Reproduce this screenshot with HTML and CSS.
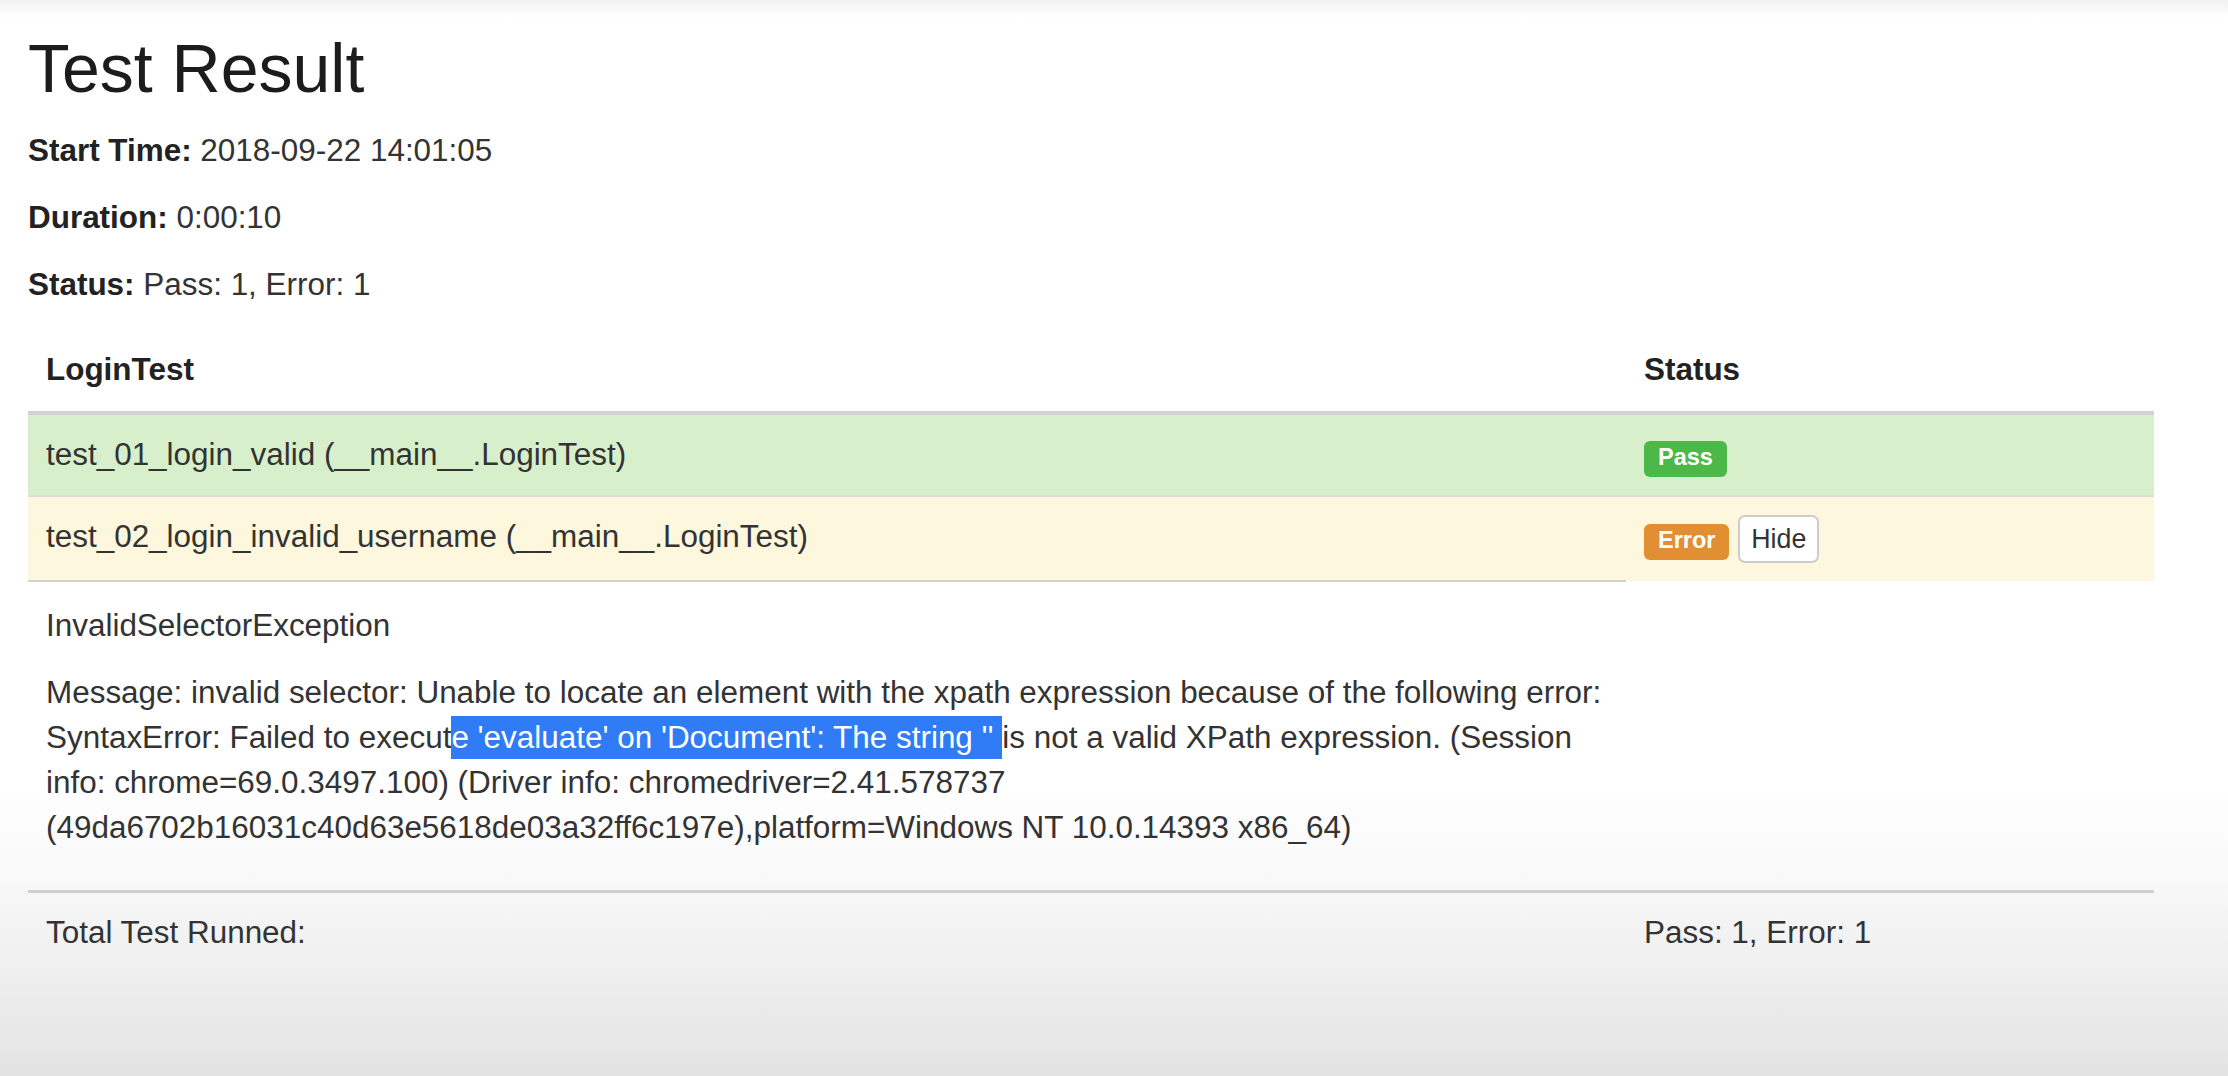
FILE: index.html
```html
<!DOCTYPE html>
<html lang="en">
<head>
<meta charset="utf-8">
<title>Test Result</title>
<link rel="stylesheet" href="styles.css">
</head>
<body>
<div class="page">
  <h1 class="title">Test Result</h1>
  <p class="meta"><strong>Start Time:</strong> 2018-09-22 14:01:05</p>
  <p class="meta"><strong>Duration:</strong> 0:00:10</p>
  <p class="meta"><strong>Status:</strong> Pass: 1, Error: 1</p>
  <table class="results">
    <colgroup><col class="col-name"><col class="col-status"></colgroup>
    <thead>
      <tr><th>LoginTest</th><th>Status</th></tr>
    </thead>
    <tbody>
      <tr class="row-pass">
        <td>test_01_login_valid (__main__.LoginTest)</td>
        <td><span class="badge badge-pass">Pass</span></td>
      </tr>
      <tr class="row-error">
        <td>test_02_login_invalid_username (__main__.LoginTest)</td>
        <td><span class="badge badge-error">Error</span> <button class="btn-hide" type="button">Hide</button></td>
      </tr>
      <tr class="row-detail">
        <td class="detail-cell">
          <p class="detail-p">InvalidSelectorException</p>
          <p class="detail-p">Message: invalid selector: Unable to locate an element with the xpath expression because of the following error: SyntaxError: Failed to execut<span class="sel">e 'evaluate' on 'Document': The string '' </span>is not a valid XPath expression. (Session info: chrome=69.0.3497.100) (Driver info: chromedriver=2.41.578737 (49da6702b16031c40d63e5618de03a32ff6c197e),platform=Windows NT 10.0.14393 x86_64)</p>
        </td>
        <td class="detail-empty"></td>
      </tr>
      <tr class="row-total">
        <td>Total Test Runned:</td>
        <td>Pass: 1, Error: 1</td>
      </tr>
    </tbody>
  </table>
</div>
</body>
</html>
```

FILE: styles.css
```css
html {
  height: 100%;
  background: linear-gradient(to bottom, #f1f1f1 0px, #ffffff 18px, #ffffff 780px, #f9f9f9 870px, #f2f2f2 940px, #e3e3e3 1076px);
}

body {
  margin: 0;
  font-family: "Liberation Sans", Arial, sans-serif;
  font-size: 31.45px;
  line-height: 44.7px;
  color: #333333;
}

.page {
  width: 2126px;
  padding: 32px 0 0 28px;
}

.title {
  font-size: 68px;
  line-height: 72px;
  font-weight: 400;
  margin: 0 0 25px 0;
  color: #1c1c1c;
}

.meta {
  margin: 0 0 22.3px 0;
}

.meta strong {
  color: #222222;
}

.results {
  width: 2126px;
  border-collapse: collapse;
  table-layout: fixed;
  margin-top: 2px;
}

.col-name { width: 1598px; }
.col-status { width: 528px; }

.results th,
.results td {
  padding: 18px;
  text-align: left;
  vertical-align: top;
}

.results th {
  font-weight: bold;
  color: #222222;
  border-bottom: 4px solid #d2d2d2;
}

.results td {
  border-top: 2px solid #dcdcdc;
}

.row-pass td {
  background: #d7efcb;
}

.row-error td {
  background: #fcf7dd;
}

.row-detail td {
  padding-top: 22px;
  padding-bottom: 17px;
}

.row-detail .detail-cell {
  border-top: 2px solid #d0d0d0;
}

.row-detail .detail-empty {
  border-top: none;
}

.detail-p {
  margin: 0 0 22.3px 0;
}

.sel {
  background: #2f7cf6;
  color: #ffffff;
  padding: 4px 0;
}

.row-total td {
  border-top: 3px solid #cfcfcf;
}

.badge {
  display: inline-block;
  font-size: 23.5px;
  font-weight: bold;
  line-height: 1;
  color: #ffffff;
  padding: 5px 14px 8px;
  border-radius: 6px;
  vertical-align: baseline;
}

.badge-pass {
  background: #4cb848;
}

.badge-error {
  background: #e28e32;
}

.btn-hide {
  font-family: "Liberation Sans", Arial, sans-serif;
  font-size: 26.8px;
  line-height: 40px;
  color: #333333;
  background: #ffffff;
  border: 2px solid #cccccc;
  border-radius: 7px;
  padding: 2px 11px;
  vertical-align: middle;
  margin: 0;
}
```
